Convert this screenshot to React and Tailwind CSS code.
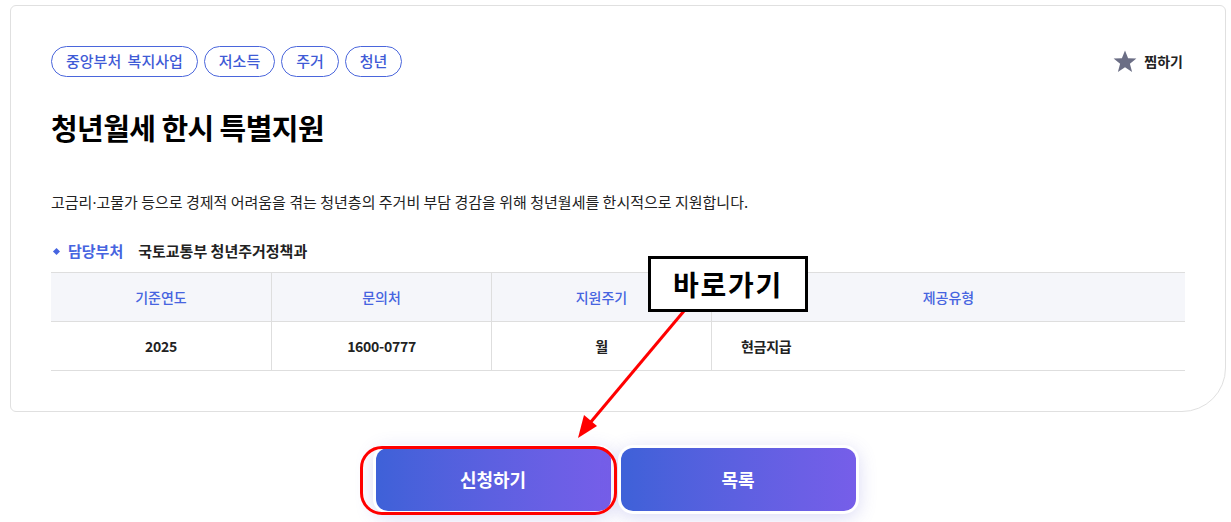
import { Fragment } from 'react'

const tags = ['중앙부처 복지사업', '저소득', '주거', '청년']

const columns = [
  { head: '기준연도', value: '2025', width: 'w-[220px]' },
  { head: '문의처', value: '1600-0777', width: 'w-[220px]' },
  { head: '지원주기', value: '월', width: 'w-[220px]' },
  { head: '제공유형', value: '현금지급', width: 'flex-1', left: true },
]

function StarIcon() {
  return (
    <svg width="24" height="23" viewBox="0 0 24 23" aria-hidden="true">
      <polygon
        points="12,0.5 15.1,8.2 23.4,8.6 16.9,13.8 19.1,21.9 12,17.3 4.9,21.9 7.1,13.8 0.6,8.6 8.9,8.2"
        fill="#6b6e85"
      />
    </svg>
  )
}

function InfoTable() {
  return (
    <div className="mt-[10px] border-t border-[#dedede]">
      <div className="flex h-[49px] border-b border-[#dedede] bg-[#f5f6fa]">
        {columns.map((c, i) => (
          <div
            key={c.head}
            className={`${c.width} flex items-center justify-center text-[14px] font-medium text-[#4664e0] ${
              i > 0 ? 'border-l border-[#dedede]' : ''
            }`}
          >
            {c.head}
          </div>
        ))}
      </div>
      <div className="flex h-[49px] border-b border-[#dedede]">
        {columns.map((c, i) => (
          <div
            key={c.head}
            className={`${c.width} flex items-center text-[14px] font-semibold tracking-[-0.02em] text-[#222] ${
              c.left ? 'justify-start pl-[29px]' : 'justify-center'
            } ${i > 0 ? 'border-l border-[#dedede]' : ''}`}
          >
            {c.value}
          </div>
        ))}
      </div>
    </div>
  )
}

function GradientButton({ label }) {
  return (
    <button
      type="button"
      className="rounded-[15px] bg-white p-[3px] shadow-[0_4px_18px_rgba(90,90,210,0.22)]"
    >
      <span className="flex h-[63px] w-[235px] items-center justify-center rounded-[12px] bg-linear-to-r from-[#3e61d8] to-[#765ee9] text-[18px] font-bold text-white">
        {label}
      </span>
    </button>
  )
}

export default function App() {
  return (
    <div className="relative h-[522px] w-[1231px] overflow-hidden bg-white font-['Noto_Sans_CJK_KR','Noto_Sans',sans-serif] text-[#222]">
      <div className="ml-[10px] mt-[5px] w-[1216px] rounded-[6px] rounded-br-[44px] border border-[#e0e0e0] bg-white px-[40px] pb-[40px] pt-[40px]">
        <div className="flex h-[31px] items-center justify-between">
          <div className="flex gap-[6px]">
            {tags.map((t) => (
              <span
                key={t}
                className="flex h-[31px] items-center rounded-full border border-[#4a66dc] px-[14px] text-[15px] font-medium text-[#3f5bd6] [word-spacing:3px]"
              >
                {t}
              </span>
            ))}
          </div>
          <button type="button" className="mr-[2px] flex items-center gap-[7px] text-[14px] font-bold text-[#222]">
            <StarIcon />
            찜하기
          </button>
        </div>

        <h1 className="mt-[31px] text-[29px] font-bold leading-[38px] tracking-[-0.02em] text-black">
          청년월세 한시 특별지원
        </h1>

        <p className="mt-[45px] text-[15px] leading-[22px] text-[#222]">
          고금리<span className="font-['Noto_Sans',sans-serif]">·</span>고물가 등으로 경제적 어려움을 겪는 청년층의 주거비 부담 경감을 위해
          청년월세를 한시적으로 지원합니다.
        </p>

        <div className="mt-[27px] flex items-center text-[15px] leading-[22px]">
          <span className="ml-[3px] mr-[9px] h-[5px] w-[5px] rotate-45 bg-[#4664e0]" />
          <span className="font-bold text-[#4664e0]">담당부처</span>
          <span className="ml-[15px] font-semibold text-[#222]">국토교통부 청년주거정책과</span>
        </div>

        <InfoTable />
      </div>

      <div className="mt-[33px] flex justify-center gap-[4px]">
        <GradientButton label="신청하기" />
        <GradientButton label="목록" />
      </div>

      {/* annotation overlay */}
      <div className="pointer-events-none absolute left-[360px] top-[446px] h-[69px] w-[257px] rounded-[22px] border-[3px] border-[#ff0000]" />
      <svg className="pointer-events-none absolute inset-0" width="1231" height="522" aria-hidden="true">
        <line x1="684" y1="311" x2="590" y2="423" stroke="#ff0000" strokeWidth="3" />
        <polygon points="578,438 584,415 597,426" fill="#ff0000" />
      </svg>
      <div className="pointer-events-none absolute left-[648px] top-[256px] flex h-[56px] w-[160px] items-center justify-center border-[3px] border-black bg-white text-[28px] font-bold tracking-[0.06em] text-black">
        바로가기
      </div>
    </div>
  )
}
